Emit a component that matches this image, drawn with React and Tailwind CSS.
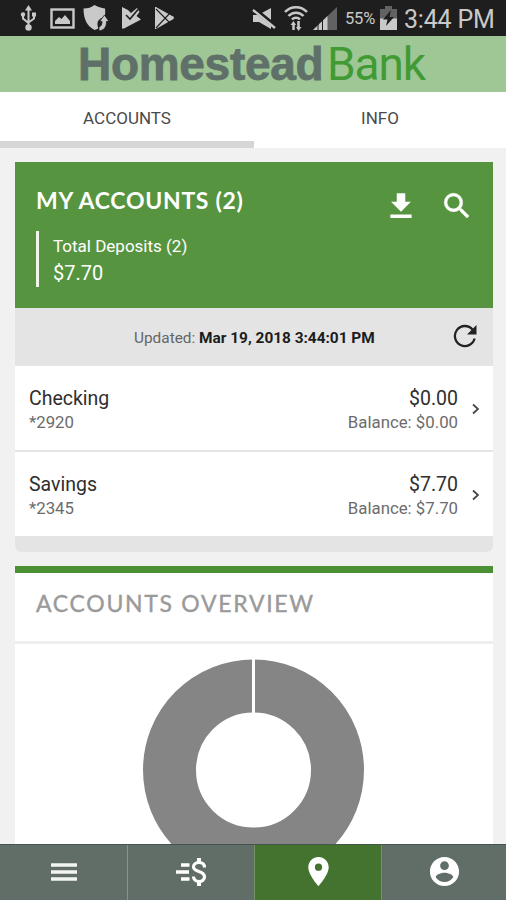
const accounts = [
    { name: 'Checking', number: '*2920', amount: '$0.00', balance: '$0.00' },
    { name: 'Savings', number: '*2345', amount: '$7.70', balance: '$7.70' },
];

const StatusBar = () => (
    <div className="flex h-9 shrink-0 items-center bg-[#1e1e1e] text-[#c9c9c9]">
        <svg className="ml-5 h-[26px] w-[17px] shrink-0" viewBox="0 0 17 26" fill="none" stroke="currentColor" strokeWidth="2">
            <path d="M8.5 4v18M3 10v3.5l5.5 4.5M14 10v3.5l-5.5 4" />
            <path d="M8.5 0l3.500 5.500H5z" fill="currentColor" stroke="none" />
            <circle cx="3" cy="9.5" r="2.200" fill="currentColor" stroke="none" />
            <path d="M12 7.5h4v4h-4z" fill="currentColor" stroke="none" />
            <circle cx="8.5" cy="22.5" r="3.200" fill="currentColor" stroke="none" />
        </svg>
        <svg className="ml-[13px] h-[21px] w-[25px] shrink-0" viewBox="0 0 25 21" fill="none">
            <rect x="1.5" y="1.5" width="22" height="18" stroke="currentColor" strokeWidth="2.4" />
            <path d="M5 16v-3l4-4 2.500 2L15 7l5 6v3z" fill="currentColor" />
        </svg>
        <svg className="ml-2 h-[26px] w-[26px] shrink-0" viewBox="0 0 26 26" fill="currentColor">
            <path d="M11.500 0c3 2 7 3 10.500 3.500.4 3 .4 5.500-.5 8.500-4 1-7 3-7 7 0 2 .3 3 1 4-1 1-2 1.500-4 2C4 21 .5 14 .5 3.500 5 3.500 8.500 2.500 11.500 0z" />
            <path d="M21.500 10l4.500 6.500h-2.500c0 6-2.500 8.500-7.500 9.500v-4c2-.5 3-2.500 3-5.500h-2.500z" stroke="#1e1e1e" strokeWidth=".8" />
        </svg>
        <svg className="ml-3 h-[22px] w-[20px] shrink-0" viewBox="0 0 20 22">
            <path d="M1 0l6 3 3 3 6-5 2.500 4-3 4 4.500 3.500L3 21.500H1z" fill="currentColor" />
            <path d="M5 8l4 4 8-9.500" fill="none" stroke="#1e1e1e" strokeWidth="1.600" />
        </svg>
        <svg className="ml-[13px] h-[22px] w-[21px] shrink-0" viewBox="0 0 21 22">
            <path d="M1 0h1l18 10-.5 2L2 22H1z" fill="currentColor" />
            <path d="M2 2l14 14M2 21L16 6" stroke="#1e1e1e" strokeWidth="1.100" />
        </svg>
        <svg className="ml-[77px] h-[23px] w-[24px] shrink-0" viewBox="0 0 24 23">
            <path d="M1 8h5l13-7v21L7 15H1z" fill="currentColor" />
            <path d="M2 2l22 18" stroke="#1e1e1e" strokeWidth="4.500" />
            <path d="M1 3l22 18" stroke="currentColor" strokeWidth="2.300" />
        </svg>
        <svg className="ml-[8px] h-[26px] w-[24px] shrink-0" viewBox="0 0 24 26" fill="none" stroke="currentColor" strokeWidth="2.500">
            <path d="M1 7c6-6.500 16-6.500 22 0M4.500 11c4-4.500 11-4.500 15 0M8 14.500c2-2.500 6-2.500 8 0" />
            <path d="M9.500 25v-7M14.500 16v8" strokeWidth="2.500" />
            <path d="M6.500 20l3-4 2.500 4zM12 22l2.500 4 3-4z" fill="currentColor" stroke="none" />
        </svg>
        <svg className="ml-[5px] h-[23px] w-[24px] shrink-0" viewBox="0 0 24 23">
            <path d="M0 23L24 0v23z" fill="#626262" />
            <path d="M0 23L14.500 9.100V23z" fill="currentColor" />
            <path d="M5 16v7M9.500 12v11" stroke="#1e1e1e" strokeWidth="1" />
        </svg>
        <span className="mt-[3px] ml-[8px] w-[32px] text-[16.500px] tracking-[-0.2px] whitespace-nowrap">55%</span>
        <svg className="ml-[3px] h-[24px] w-[17px] shrink-0" viewBox="0 0 17 24">
            <path d="M5 0h7v3h5v10H0V3h5z" fill="#626262" />
            <path d="M0 12.500h17V24H0z" fill="currentColor" />
            <path d="M11 4l-8 9.500h4.500L6 20l8-9H9.500z" fill="#1e1e1e" />
        </svg>
        <span className="mt-[3px] ml-[7px] text-[25px] tracking-[-0.2px] whitespace-nowrap">3:44 PM</span>
    </div>
);

const Header = () => (
    <div className="flex h-14 shrink-0 items-center bg-[#9fc795] pl-[78px] text-[46px] leading-[56px] whitespace-nowrap">
        <span className="w-[249px] font-['Liberation_Sans',sans-serif] font-bold tracking-[-0.3px] text-[#5f7069] [-webkit-text-stroke:0.8px_#5f7069]">Homestead</span>
        <span className="tracking-[-1.1px] text-[#429a35]">Bank</span>
    </div>
);

const Tabs = () => (
    <div className="flex h-14 shrink-0 bg-white text-[17px] text-[#4a4a4a]">
        <button className="w-[254px] border-b-[7px] border-[#d6d6d6] pt-[4px]">ACCOUNTS</button>
        <button className="flex-1 border-b-[7px] border-white pt-[4px]">INFO</button>
    </div>
);

const AccountRow = ({ account }) => (
    <div className="flex h-[86px] items-center border-b-2 border-[#e4e4e4] pr-[12px] pl-[14px]">
        <div className="flex-1 pt-[3px]">
            <p className="text-[19.500px] leading-[25px] text-[#2e2e2e]">{account.name}</p>
            <p className="text-[16.800px] leading-[22px] text-[#6c6c6c]">{account.number}</p>
        </div>
        <div className="pt-[3px] text-right">
            <p className="text-[19.500px] leading-[25px] text-[#2e2e2e]">{account.amount}</p>
            <p className="text-[16.800px] leading-[22px] text-[#6c6c6c]">Balance: {account.balance}</p>
        </div>
        <svg className="mt-[2px] ml-[13px] h-[12px] w-[10px]" viewBox="0 0 10 12" fill="none" stroke="#444" strokeWidth="1.700">
            <path d="M2 1.500L7 6l-5 4.500" />
        </svg>
    </div>
);

const AccountsCard = () => (
    <div className="overflow-hidden rounded-b-[6px] bg-white">
        <div className="flex h-[146px] justify-between bg-[#57943f] pt-[23px] pr-[19px] pl-[21px] text-white">
            <div>
                <h2 className="font-['Lato',sans-serif] text-[23px] leading-[30px] font-bold tracking-[0.700px] whitespace-nowrap">
                    MY ACCOUNTS (2)
                </h2>
                <div className="mt-[16px] h-[56px] border-l-[3px] border-[#f0f5ee] pt-[2px] pl-[14px]">
                    <p className="text-[17px] leading-[26px]">Total Deposits (2)</p>
                    <p className="text-[20px] leading-[28px]">$7.70</p>
                </div>
            </div>
            <div className="flex gap-[22px] pt-[4px]">
                <svg className="h-[34px] w-[34px]" viewBox="0 0 24 24" fill="currentColor">
                    <path d="M19 9h-4V3H9v6H5l7 7 7-7zM4.500 18v2.500h15V18h-15z" />
                </svg>
                <svg className="h-[34px] w-[34px]" viewBox="0 0 24 24" fill="currentColor" stroke="currentColor" strokeWidth=".4">
                    <path d="M15.500 14h-.79l-.28-.27A6.471 6.471 0 0 0 16 9.500 6.500 6.500 0 1 0 9.500 16c1.610 0 3.090-.59 4.230-1.570l.27.28v.79l5 4.990L20.490 19l-4.990-5zm-6 0C7.010 14 5 11.990 5 9.500S7.010 5 9.500 5 14 7.010 14 9.500 11.990 14 9.500 14z" />
                </svg>
            </div>
        </div>
        <div className="flex h-[58px] items-center bg-[#e4e4e4] pr-[16px] text-[15.400px] text-[#666]">
            <p className="mt-[3px] ml-[119px] flex-1 whitespace-nowrap">
                Updated: <b className="font-bold text-[#1c1c1c]">Mar 19, 2018 3:44:01 PM</b>
            </p>
            <svg className="mb-[3px] h-[24px] w-[24px]" viewBox="0 0 24 24">
                <path d="M19.500 5.500A10 10 0 1 0 21.600 14.500" fill="none" stroke="#222" strokeWidth="2.300" />
                <path d="M23.500 1v9.500H14z" fill="#222" />
            </svg>
        </div>
        {accounts.map((account) => (
            <AccountRow key={account.number} account={account} />
        ))}
        <div className="h-[14px] bg-[#e4e4e4]" />
    </div>
);

const OverviewCard = () => (
    <div className="mt-[14px] border-t-[7px] border-[#4b9035] bg-white">
        <h2 className="h-[71px] border-b-[3px] border-[#efefef] pt-[15px] pl-[21px] font-['Lato',sans-serif] text-[23px] leading-[30px] tracking-[1.700px] text-[#9a9a9a] [-webkit-text-stroke:0.4px_#9a9a9a]">
            ACCOUNTS OVERVIEW
        </h2>
        <svg className="mx-auto mt-[15px] h-[222px] w-[222px]" viewBox="0 0 222 222" fill="none">
            <circle cx="110.500" cy="111" r="84" stroke="#858585" strokeWidth="53" />
            <path d="M110.500 0v56" stroke="#fff" strokeWidth="3" />
        </svg>
    </div>
);

const BottomNav = () => (
    <div className="grid h-14 shrink-0 grid-cols-[128px_126px_128px_124px] border-t border-[#41564d] bg-[#616e67] text-white">
        <button className="flex items-center justify-center border-r border-[#87938d]">
            <svg className="mb-[2px] h-[20px] w-[26px]" viewBox="0 0 26 20" stroke="#f2f5f3" strokeWidth="3.400">
                <path d="M0 3h26M0 10h26M0 17h26" />
            </svg>
        </button>
        <button className="flex items-center justify-center">
            <svg className="mb-[2px] h-[30px] w-[32px]" viewBox="0 0 32 30" fill="none" stroke="currentColor">
                <path d="M6 8h8.500M1 15h13M6 22h8.500" strokeWidth="3.400" />
                <path d="M29.500 10.500C29.500 7 27 5.500 24 5.500c-3 0-5.500 1.700-5.500 4.300 0 6 11 3.500 11 10 0 3-2.300 4.700-5.500 4.700s-5.500-2-5.500-5" strokeWidth="3.200" />
                <path d="M24 1v4M24 25v4" strokeWidth="4" />
            </svg>
        </button>
        <button className="flex items-center justify-center border-x border-[#739468] bg-[#43732f]">
            <svg className="mb-[2px] h-[35px] w-[35px]" viewBox="0 0 24 24" fill="currentColor">
                <path d="M12 2C8.130 2 5 5.130 5 9c0 5.250 7 13 7 13s7-7.750 7-13c0-3.870-3.130-7-7-7zm0 9.500a2.500 2.500 0 0 1 0-5 2.500 2.500 0 0 1 0 5z" />
            </svg>
        </button>
        <button className="flex items-center justify-center">
            <svg className="mb-[2px] h-[35px] w-[35px]" viewBox="0 0 24 24" fill="currentColor">
                <path d="M12 2C6.480 2 2 6.480 2 12s4.480 10 10 10 10-4.480 10-10S17.520 2 12 2zm0 3c1.660 0 3 1.340 3 3s-1.340 3-3 3-3-1.340-3-3 1.340-3 3-3zm0 14.200a7.200 7.200 0 0 1-6-3.220c.03-1.990 4-3.080 6-3.080 1.990 0 5.970 1.090 6 3.080a7.200 7.200 0 0 1-6 3.220z" />
            </svg>
        </button>
    </div>
);

const App = () => (
    <div className="flex h-[900px] w-[506px] flex-col overflow-hidden bg-[#f1f1f1] font-['Roboto',sans-serif]">
        <StatusBar />
        <Header />
        <Tabs />
        <div className="min-h-0 flex-1 overflow-hidden pt-[14px] pr-[13px] pl-[15px]">
            <AccountsCard />
            <OverviewCard />
        </div>
        <BottomNav />
    </div>
);

export default App;
